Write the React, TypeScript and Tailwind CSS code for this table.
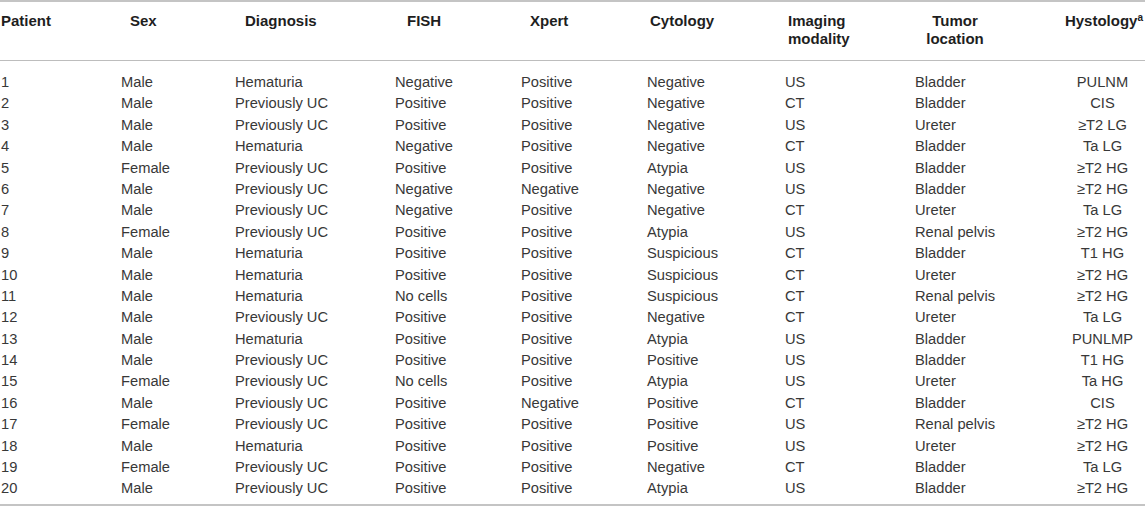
const rows: string[][] = [
  ["1", "Male", "Hematuria", "Negative", "Positive", "Negative", "US", "Bladder", "PULNM"],
  ["2", "Male", "Previously UC", "Positive", "Positive", "Negative", "CT", "Bladder", "CIS"],
  ["3", "Male", "Previously UC", "Positive", "Positive", "Negative", "US", "Ureter", "≥T2 LG"],
  ["4", "Male", "Hematuria", "Negative", "Positive", "Negative", "CT", "Bladder", "Ta LG"],
  ["5", "Female", "Previously UC", "Positive", "Positive", "Atypia", "US", "Bladder", "≥T2 HG"],
  ["6", "Male", "Previously UC", "Negative", "Negative", "Negative", "US", "Bladder", "≥T2 HG"],
  ["7", "Male", "Previously UC", "Negative", "Positive", "Negative", "CT", "Ureter", "Ta LG"],
  ["8", "Female", "Previously UC", "Positive", "Positive", "Atypia", "US", "Renal pelvis", "≥T2 HG"],
  ["9", "Male", "Hematuria", "Positive", "Positive", "Suspicious", "CT", "Bladder", "T1 HG"],
  ["10", "Male", "Hematuria", "Positive", "Positive", "Suspicious", "CT", "Ureter", "≥T2 HG"],
  ["11", "Male", "Hematuria", "No cells", "Positive", "Suspicious", "CT", "Renal pelvis", "≥T2 HG"],
  ["12", "Male", "Previously UC", "Positive", "Positive", "Negative", "CT", "Ureter", "Ta LG"],
  ["13", "Male", "Hematuria", "Positive", "Positive", "Atypia", "US", "Bladder", "PUNLMP"],
  ["14", "Male", "Previously UC", "Positive", "Positive", "Positive", "US", "Bladder", "T1 HG"],
  ["15", "Female", "Previously UC", "No cells", "Positive", "Atypia", "US", "Ureter", "Ta HG"],
  ["16", "Male", "Previously UC", "Positive", "Negative", "Positive", "CT", "Bladder", "CIS"],
  ["17", "Female", "Previously UC", "Positive", "Positive", "Positive", "US", "Renal pelvis", "≥T2 HG"],
  ["18", "Male", "Hematuria", "Positive", "Positive", "Positive", "US", "Ureter", "≥T2 HG"],
  ["19", "Female", "Previously UC", "Positive", "Positive", "Negative", "CT", "Bladder", "Ta LG"],
  ["20", "Male", "Previously UC", "Positive", "Positive", "Atypia", "US", "Bladder", "≥T2 HG"],
];

const cols = "grid grid-cols-[120px_114px_160px_126px_126px_138px_130px_145px_1fr]";

export default function App() {
  return (
    <div
      className="h-[508px] w-[1145px] bg-white"
      style={{ fontFamily: '"Liberation Sans", Arial, Helvetica, sans-serif' }}
    >
      <div className="border-t-2 border-b-2 border-[#c4c4c4]">
        {/* header */}
        <div
          className={`${cols} border-b-[1.5px] border-[#bdbdbd] pb-[12px] pl-[1px] pt-[10px] text-[15px] font-bold leading-[18px] text-[#1e1e1e]`}
        >
          <div>Patient</div>
          <div className="pl-[9px]">Sex</div>
          <div className="pl-[10px]">Diagnosis</div>
          <div className="pl-[12px]">FISH</div>
          <div className="pl-[9px]">Xpert</div>
          <div className="pl-[3px]">Cytology</div>
          <div className="pl-[3px]">
            Imaging
            <br />
            modality
          </div>
          <div className="w-[80px] text-center">
            Tumor
            <br />
            location
          </div>
          <div className="pr-[2px] text-right">
            Hystology<sup className="text-[10px]">a</sup>
          </div>
        </div>

        {/* body */}
        <div className="pb-[4px] pl-[1px] pt-[11px] text-[14.7px] leading-[21.4px] text-[#383838]">
          {rows.map((r) => (
            <div key={r[0]} className={`${cols} h-[21.4px]`}>
              {r.map((cell, i) => (
                <div key={i} className={i === 8 ? "text-center" : ""}>
                  {cell}
                </div>
              ))}
            </div>
          ))}
        </div>
      </div>
    </div>
  );
}
